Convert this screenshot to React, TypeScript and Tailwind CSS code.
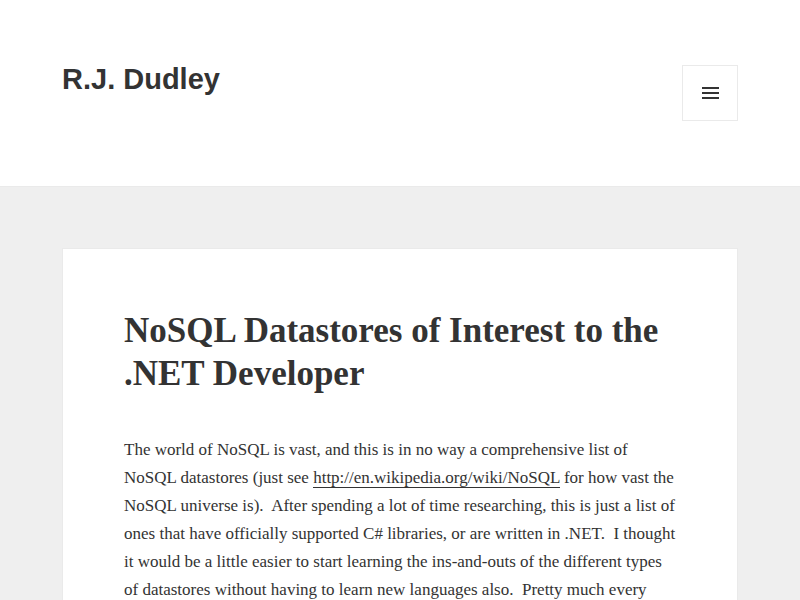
import React from "react";

export default function App() {
  return (
    <div className="min-h-[600px] bg-[#efefef] text-[#333333]">
      <header className="h-[187px] bg-white border-b border-[#eaeaea] px-[62px] flex justify-between items-start">
        <div className="pt-[59px] text-[29px] leading-[40px] font-bold" style={{ fontFamily: '"Liberation Sans", Arial, sans-serif' }}>
          R.J. Dudley
        </div>
        <button className="mt-[65px] w-[56px] h-[56px] border border-[#eaeaea] flex flex-col items-center justify-center gap-[3px]">
          <span className="block w-[17px] h-[2px] bg-[#333333]" />
          <span className="block w-[17px] h-[2px] bg-[#333333]" />
          <span className="block w-[17px] h-[2px] bg-[#333333]" />
        </button>
      </header>
      <main className="px-[62px] pt-[61px]">
        <article className="bg-white border border-[#eaeaea] border-b-0 px-[61px] pt-[60px] pb-[40px]" style={{ fontFamily: '"Liberation Serif", "Times New Roman", serif' }}>
          <h2 className="text-[35px] leading-[43px] font-bold m-0">
            NoSQL Datastores of Interest to the .NET Developer
          </h2>
          <p className="mt-[41px] text-[17px] leading-[28px]">
            The world of NoSQL is vast, and this is in no way a comprehensive list of NoSQL datastores (just see{" "}
            <a className="border-b border-[#333333]">http://en.wikipedia.org/wiki/NoSQL</a> for how vast the NoSQL universe is).{"\u00a0 "}After spending a lot of time researching, this is just a list of ones that have officially supported C# libraries, or are written in .NET.{"\u00a0 "}I thought it would be a little easier to start learning the ins-and-outs of the different types of datastores without having to learn new languages also.{"\u00a0 "}Pretty much every datastore here has a .NET client library available.
          </p>
        </article>
      </main>
    </div>
  );
}
